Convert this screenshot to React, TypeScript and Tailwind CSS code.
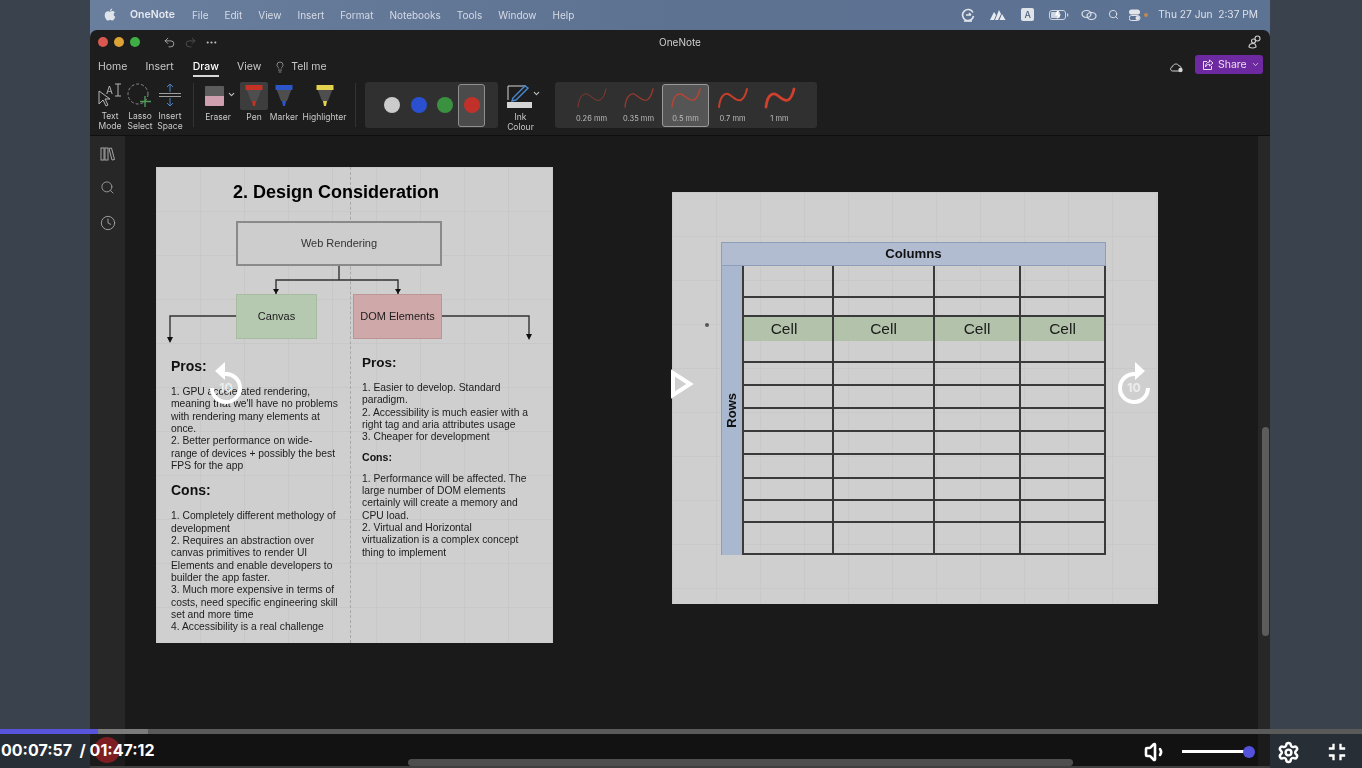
import { ChevronDown, Clock, Lightbulb, MoreHorizontal, Redo2, Search, Settings, Undo2, Volume1 } from "lucide-react";
import { MdFullscreenExit } from "react-icons/md";

const menuItems = ["File", "Edit", "View", "Insert", "Format", "Notebooks", "Tools", "Window", "Help"];

const thicknesses = [
  { label: "0.26 mm", width: 1, opacity: 0.55 },
  { label: "0.35 mm", width: 1.3, opacity: 0.65 },
  { label: "0.5 mm", width: 1.6, opacity: 0.75, active: true },
  { label: "0.7 mm", width: 2, opacity: 0.95 },
  { label: "1 mm", width: 2.8, opacity: 1 },
];

const leftPros = [
  "1. GPU accelerated rendering,",
  "meaning that we'll have no problems",
  "with rendering many elements at",
  "once.",
  "2. Better performance on wide-",
  "range of devices + possibly the best",
  "FPS for the app",
];

const leftCons = [
  "1. Completely different methology of",
  "development",
  "2. Requires an abstraction over",
  "canvas primitives to render UI",
  "Elements and enable developers to",
  "builder the app faster.",
  "3. Much more expensive in terms of",
  "costs, need specific engineering skill",
  "set and more time",
  "4. Accessibility is a real challenge",
];

const rightPros = [
  "1. Easier to develop. Standard",
  "paradigm.",
  "2. Accessibility is much easier with a",
  "right tag and aria attributes usage",
  "3. Cheaper for development",
];

const rightCons = [
  "1. Performance will be affected. The",
  "large number of DOM elements",
  "certainly will create a memory and",
  "CPU load.",
  "2. Virtual and Horizontal",
  "virtualization is a complex concept",
  "thing to implement",
];

const rowHeights = [32, 19, 24, 22, 23, 23, 23, 23, 24, 22, 22, 30];

function Lines({ lines }: { lines: string[] }) {
  return (
    <div className="text-[10.3px] leading-[12.33px] text-[#1c1c1c]">
      {lines.map((l) => (
        <div key={l} className="whitespace-nowrap">{l}</div>
      ))}
    </div>
  );
}

function Squiggle({ width, opacity }: { width: number; opacity: number }) {
  return (
    <svg width="32" height="22" viewBox="0 0 32 22" fill="none" style={{ opacity }}>
      <path d="M2 20C3 10 7 6 11 7C16 9 19 15 24 13C28 11 29 6 30 2" stroke="#d0402c" strokeWidth={width} strokeLinecap="round" />
    </svg>
  );
}

function ToolLabel({ children }: { children: React.ReactNode }) {
  return <div className="text-center text-[8.5px] leading-[10px] text-[#c9c9c9]">{children}</div>;
}

function Funnel({ top, tip }: { top: string; tip: string }) {
  return (
    <svg width="20" height="24" viewBox="0 0 20 24">
      <path d="M2 4H18L13 17H7Z" fill="#4e4e4e" />
      <rect x="1.5" y="1" width="17" height="5" fill={top} />
      <path d="M8 17H12L11 22H9Z" fill={tip} />
    </svg>
  );
}

function Replay({ className, mirrored }: { className: string; mirrored?: boolean }) {
  return (
    <div className={`absolute top-[358px] h-[48px] w-[40px] ${className}`}>
      <svg width="40" height="48" viewBox="0 0 40 48" fill="none" className={mirrored ? "-scale-x-100" : ""}>
        <path d="M21 16A14 14 0 1 0 34 30" stroke="white" strokeWidth="4" />
        <path d="M21 4L31 13L21 22Z" fill="white" />
      </svg>
      <span className="absolute left-0 top-[23px] w-full text-center text-[12px] font-bold leading-[14px] text-[#ececec]">10</span>
    </div>
  );
}

function SlideOne() {
  return (
    <div className="relative h-[476px] w-[397px] shrink-0 bg-[#cfcfcf] bg-[linear-gradient(#c8c8c8_1px,transparent_1px),linear-gradient(90deg,#c8c8c8_1px,transparent_1px)] bg-[size:44px_44px] pt-[13px] font-['Liberation_Sans',sans-serif]">
      <div className="absolute bottom-0 left-[194px] top-0 border-l border-dashed border-[#a8a8a8]" />
      <h2 className="relative pl-[77px] text-[18px] font-bold leading-[24px] text-black">2. Design Consideration</h2>
      <div className="relative mt-[17px] h-[133px]">
        <svg className="absolute left-0 top-0" width="397" height="133" fill="none">
          <path d="M183 45V59M120 73V59H242V73M80 95H14V118M286 95H373V115" stroke="#333" strokeWidth="1.4" />
          <path d="M117 68H123L120 73ZM239 68H245L242 73ZM11 116H17L14 122ZM370 113H376L373 119Z" fill="#111" />
        </svg>
        <div className="absolute left-[80px] top-0 flex h-[45px] w-[206px] items-center justify-center border-2 border-[#8a8a8a] bg-[#cdcdcd] text-[11px] text-[#333]">Web Rendering</div>
        <div className="absolute left-[80px] top-[73px] flex h-[45px] w-[81px] items-center justify-center border border-[#a6bb9f] bg-[#b5c8b0] text-[11px] text-[#1c1c1c]">Canvas</div>
        <div className="absolute left-[197px] top-[73px] flex h-[45px] w-[89px] items-center justify-center border border-[#bd9393] bg-[#cfa9a9] text-[11px] text-[#1c1c1c]">DOM Elements</div>
      </div>
      <div className="relative flex">
        <div className="ml-[15px] w-[191px] pt-[2px]">
          <h3 className="text-[14px] font-bold leading-[20px] text-[#111]">Pros:</h3>
          <div className="mt-[10px]"><Lines lines={leftPros} /></div>
          <h3 className="mt-[8px] text-[14px] font-bold leading-[20px] text-[#111]">Cons:</h3>
          <div className="mt-[10px]"><Lines lines={leftCons} /></div>
        </div>
        <div className="mt-px w-[180px]">
          <h3 className="text-[13.5px] font-bold leading-[16px] text-[#111]">Pros:</h3>
          <div className="mt-[11px]"><Lines lines={rightPros} /></div>
          <h4 className="mt-[7px] text-[10.6px] font-bold leading-[12px] text-[#111]">Cons:</h4>
          <div className="mt-[10px]"><Lines lines={rightCons} /></div>
        </div>
      </div>
    </div>
  );
}

function SlideTwo() {
  return (
    <div className="relative ml-[119px] mt-[25px] h-[412px] w-[486px] shrink-0 bg-[#cfcfcf] bg-[linear-gradient(#c9c9c9_1px,transparent_1px),linear-gradient(90deg,#c9c9c9_1px,transparent_1px)] bg-[size:44px_44px] pl-[49px] pt-[50px] font-['Liberation_Sans',sans-serif]">
      <div className="absolute left-[33px] top-[131px] h-[4px] w-[4px] rounded-full bg-[#555]" />
      <div className="w-[385px]">
        <div className="flex h-[24px] items-center justify-center border border-[#8d9dba] bg-[#b1bcd1] text-[13.2px] font-bold text-[#111]">Columns</div>
        <div className="flex">
          <div className="flex w-[21px] items-center justify-center border-l border-[#8d9dba] bg-[#a9b7cf]">
            <span className="rotate-180 text-[13px] font-bold text-[#111] [writing-mode:vertical-rl]">Rows</span>
          </div>
          <div className="w-[364px] border-b-2 border-l-2 border-r-2 border-[#3a3a3a]">
            {rowHeights.map((h, i) => (
              <div key={i} className={`grid grid-cols-[90px_101px_86px_1fr] border-[#3a3a3a] ${i === 2 ? "bg-[#b3c2aa]" : ""} ${i === 2 || i === 11 ? "" : "border-b-2"}`} style={{ height: h }}>
                {[0, 1, 2, 3].map((c) => (
                  <div key={c} className={`flex items-center justify-center text-[15.5px] text-[#1b1b1b] ${c < 3 ? "border-r-2 border-[#3a3a3a]" : ""} ${c === 0 ? "pr-[8px]" : ""}`}>
                    {i === 2 ? "Cell" : ""}
                  </div>
                ))}
              </div>
            ))}
          </div>
        </div>
      </div>
    </div>
  );
}

export default function App() {
  return (
    <div className="relative flex h-[768px] w-full overflow-hidden bg-[#3a424e] font-['Inter',sans-serif]">
      <div className="ml-[90px] flex w-[1180px] shrink-0 flex-col bg-[linear-gradient(90deg,#6a7e9e,#5d7191_50%,#5d7393)] blur-[0.4px]">
        {/* mac menu bar */}
        <div className="flex h-[30px] shrink-0 items-center pl-[14px] pr-[12px] text-[10px] text-[#d5dbe6]">
          <svg width="12" height="14" viewBox="0 0 12 14" fill="#dfe3ea">
            <path d="M8.3 0.5C8.4 1.6 7.3 3 6 3C5.9 1.8 7.1 0.6 8.3 0.5ZM6.1 3.6C6.8 3.6 7.4 3.1 8.4 3.1C9.3 3.1 10.2 3.6 10.8 4.4C9.1 5.4 9.4 7.9 11.3 8.7C10.8 10.2 9.6 12.6 8.3 12.6C7.5 12.6 7.1 12 6.2 12C5.2 12 4.8 12.6 4 12.6C2.6 12.6 0.7 9.6 0.7 7.2C0.7 4.6 2.4 3.2 3.9 3.2C4.8 3.2 5.5 3.6 6.1 3.6Z" />
          </svg>
          <span className="ml-[14px] mr-[17px] text-[10.5px] font-semibold text-[#e6e9ef]">OneNote</span>
          <div className="flex gap-[16px]">
            {menuItems.map((m) => <span key={m}>{m}</span>)}
          </div>
          <div className="ml-auto flex items-center text-[#dde2ea]">
            <svg width="14" height="14" viewBox="0 0 14 14" fill="none" stroke="#e2e6ec" strokeWidth="1.6"><path d="M12 4.5A5.5 5.5 0 1 0 12.5 8" /><path d="M5 7H10M8 5L10 7" /><path d="M3 13H11" /></svg>
            <svg className="ml-[15px]" width="16" height="12" viewBox="0 0 16 12" fill="#e8ebf0"><path d="M0 11L4 3L6 6L4 11ZM5 11L9 1L11 5L8 11ZM9.5 11L12 5L15.5 11Z" /></svg>
            <div className="ml-[15px] flex h-[13px] w-[13px] items-center justify-center rounded-[2px] bg-[#dfe3ea] text-[9px] font-medium text-[#4e5f7c]">A</div>
            <svg className="ml-[15px]" width="20" height="12" viewBox="0 0 20 12" fill="none"><rect x="0.5" y="1.5" width="16" height="9" rx="2.5" stroke="#cfd5df" /><rect x="2" y="3" width="9" height="6" rx="1" fill="#cfd5df" /><path d="M8 2L6 6.5H9L7.5 10.5L12 5.5H9L10 2Z" fill="#fff" /><rect x="18" y="4.5" width="1.2" height="3" fill="#cfd5df" /></svg>
            <svg className="ml-[12px]" width="16" height="12" viewBox="0 0 16 12" fill="none" stroke="#dde2ea" strokeWidth="1.2"><ellipse cx="5.5" cy="5" rx="4.5" ry="3.5" /><ellipse cx="10.5" cy="7" rx="4.5" ry="3.5" /></svg>
            <Search className="ml-[11px]" size={11} color="#e0e4ea" strokeWidth={2} />
            <svg className="ml-[10px]" width="12" height="12" viewBox="0 0 12 12" fill="#e2e6ec"><rect x="0" y="0.5" width="11" height="5" rx="2.5" /><rect x="0" y="6.5" width="11" height="5" rx="2.5" fill="none" stroke="#e2e6ec" /><circle cx="8.5" cy="9" r="2" /></svg>
            <div className="ml-[3px] h-[4px] w-[4px] rounded-full bg-[#c08a50]" />
            <span className="ml-[10px] whitespace-pre text-[10.2px]">Thu 27 Jun  2:37 PM</span>
          </div>
        </div>

        {/* window */}
        <div className="flex min-h-0 flex-1 flex-col overflow-hidden rounded-t-[7px] bg-[#1d1d1d]">
          <div className="relative flex h-[24px] shrink-0 items-center pl-[8px]">
            <div className="h-[10px] w-[10px] rounded-full bg-[#d9584f]" />
            <div className="ml-[6px] h-[10px] w-[10px] rounded-full bg-[#dca236]" />
            <div className="ml-[6px] h-[10px] w-[10px] rounded-full bg-[#3fae47]" />
            <Undo2 className="ml-[23px]" size={13} color="#bdbdbd" strokeWidth={1.5} />
            <Redo2 className="ml-[8px]" size={13} color="#555" strokeWidth={1.5} />
            <MoreHorizontal className="ml-[8px]" size={13} color="#c0c0c0" />
            <span className="absolute left-0 w-full text-center text-[10px] text-[#cfcfcf]">OneNote</span>
            <svg className="absolute right-[8px] top-[5px]" width="14" height="14" viewBox="0 0 14 14" fill="none" stroke="#cfcfcf" strokeWidth="1.1"><circle cx="9.5" cy="3.5" r="2.5" /><circle cx="5.5" cy="6" r="2" /><path d="M1 12C1 9 3 8.5 5 8.5C7 8.5 8 10 8 12C6 13.2 3 13.2 1 12Z" /></svg>
          </div>

          <div className="relative flex h-[23px] shrink-0 items-center pl-[8px] pt-[2px] text-[10.5px] text-[#c8c8c8]">
            <span>Home</span>
            <span className="ml-[18px]">Insert</span>
            <span className="relative ml-[19px] font-medium text-white">
              Draw
              <span className="absolute left-0 right-0 top-[16px] h-[2px] bg-[#d8d8d8]" />
            </span>
            <span className="ml-[18px]">View</span>
            <Lightbulb className="ml-[13px]" size={12} color="#b5b5b5" strokeWidth={1.4} />
            <span className="ml-[5px]">Tell me</span>
            <svg className="absolute right-[86px] top-[7px]" width="15" height="12" viewBox="0 0 15 12" fill="none"><path d="M3.5 10C1 10 1 6 3.5 5.8C4 2.5 9 2 10 5C13 5 13 10 10 10Z" stroke="#d5d5d5" /><circle cx="11.5" cy="9" r="2.2" fill="#d5d5d5" /></svg>
            <div className="absolute right-[7px] top-[1px] flex h-[19px] w-[68px] items-center rounded-[3px] bg-[#6d2aa0] pl-[7px] text-[10.5px] text-[#e8dcf2]">
              <svg width="12" height="12" viewBox="0 0 12 12" fill="none" stroke="#e8dcf2"><path d="M5 2.5H1.5V10.5H9.5V7" /><path d="M7.5 1L11 4L7.5 7V5.3C5.5 5.3 4.5 6 3.5 8C3.5 5 5 3 7.5 3Z" /></svg>
              <span className="ml-[4px]">Share</span>
              <ChevronDown className="ml-[4px]" size={9} color="#e8dcf2" />
            </div>
          </div>

          {/* ribbon */}
          <div className="flex h-[59px] shrink-0 items-start border-b border-[#0f0f0f] pl-[5px] pt-[5px]">
            <div className="flex w-[90px]">
              <div className="w-[30px]">
                <svg className="mx-auto mt-[1px]" width="28" height="24" viewBox="0 0 28 24" fill="none" stroke="#b5b5b5">
                  <path d="M3 8V21L7 17L10 23L12 22L9 16H14Z" />
                  <path d="M15 1V13M12 1H18M12 13H18" transform="translate(7 0)" />
                  <text x="10" y="11" fontSize="10" fill="#b5b5b5" stroke="none">A</text>
                </svg>
                <div className="mt-[4px]"><ToolLabel>Text<br />Mode</ToolLabel></div>
              </div>
              <div className="w-[30px]">
                <svg className="mx-auto mt-[1px]" width="28" height="24" viewBox="0 0 28 24" fill="none">
                  <circle cx="12" cy="11" r="10" stroke="#8c8c8c" strokeDasharray="3 2" />
                  <path d="M19 13V24M14 18.5H25" stroke="#4f9a58" strokeWidth="1.4" />
                </svg>
                <div className="mt-[4px]"><ToolLabel>Lasso<br />Select</ToolLabel></div>
              </div>
              <div className="w-[30px]">
                <svg className="mx-auto mt-[1px]" width="24" height="24" viewBox="0 0 24 24" fill="none">
                  <path d="M1 10.5H23M1 13.5H23" stroke="#a0a0a0" />
                  <path d="M12 1V9M12 15V23M9 4L12 1L15 4M9 20L12 23L15 20" stroke="#4a86c8" />
                </svg>
                <div className="mt-[4px]"><ToolLabel>Insert<br />Space</ToolLabel></div>
              </div>
            </div>
            <div className="ml-[8px] mt-[1px] h-[44px] w-px bg-[#333]" />
            <div className="ml-[6px] flex">
              <div className="relative w-[40px] pt-[4px]">
                <div className="ml-[5px] h-[20px] w-[19px] rounded-[1px] bg-[linear-gradient(#5c5c5c_50%,#cf9fb0_50%)]" />
                <ChevronDown className="absolute left-[27px] top-[8px]" size={9} color="#c0c0c0" strokeWidth={3} />
                <div className="mt-[6px] pr-[4px]"><ToolLabel>Eraser</ToolLabel></div>
              </div>
              <div className="w-[28px]">
                <div className="flex h-[28px] items-center justify-center rounded-[2px] bg-[#3d3d3d]"><Funnel top="#c43226" tip="#c43226" /></div>
                <div className="mt-[2px]"><ToolLabel>Pen</ToolLabel></div>
              </div>
              <div className="w-[32px]">
                <div className="flex h-[28px] items-center justify-center"><Funnel top="#2c55c9" tip="#2c55c9" /></div>
                <div className="mt-[2px]"><ToolLabel>Marker</ToolLabel></div>
              </div>
              <div className="w-[49px]">
                <div className="flex h-[28px] items-center justify-center"><Funnel top="#e3d24e" tip="#e3d24e" /></div>
                <div className="mt-[2px]"><ToolLabel>Highlighter</ToolLabel></div>
              </div>
            </div>
            <div className="ml-[6px] mt-[1px] h-[44px] w-px bg-[#333]" />
            <div className="ml-[9px] flex h-[46px] w-[133px] items-center rounded-[3px] bg-[#303030] pl-[19px]">
              <div className="h-[16px] w-[16px] rounded-full bg-[#cbcbcb]" />
              <div className="ml-[11px] h-[16px] w-[16px] rounded-full bg-[#2a50d0]" />
              <div className="ml-[10px] h-[16px] w-[16px] rounded-full bg-[#3a9140]" />
              <div className="ml-[5px] flex h-[43px] w-[27px] items-center justify-center rounded-[3px] border border-[#8f8f8f] bg-[#4b4b4b]">
                <div className="h-[16px] w-[16px] rounded-full bg-[#c2302a]" />
              </div>
            </div>
            <div className="relative ml-[4px] w-[42px]">
              <svg className="ml-[4px] mt-[2px]" width="26" height="24" viewBox="0 0 26 24" fill="none">
                <path d="M2 16V2H20" stroke="#d5d5d5" />
                <path d="M7 14L19 2L22 4L10 16L6 17Z" stroke="#4a86c8" strokeWidth="1.4" />
                <rect x="1" y="18" width="25" height="6" fill="#d5d5d5" />
              </svg>
              <ChevronDown className="absolute left-[30px] top-[7px]" size={9} color="#c0c0c0" strokeWidth={3} />
              <div className="pr-[5px] pt-[4px]"><ToolLabel>Ink<br />Colour</ToolLabel></div>
            </div>
            <div className="ml-[11px] flex h-[46px] w-[262px] items-center rounded-[3px] bg-[#303030] pl-[13px]">
              {thicknesses.map((t) => (
                <div key={t.label} className={`flex h-[43px] w-[47px] flex-col items-center rounded-[3px] border pt-[2px] ${t.active ? "border-[#9a9a9a] bg-[#555]" : "border-transparent"}`}>
                  <Squiggle width={t.width} opacity={t.opacity} />
                  <span className="mt-[4px] text-[7.5px] leading-[11px] text-[#bdbdbd]">{t.label}</span>
                </div>
              ))}
            </div>
          </div>

          {/* notebook area */}
          <div className="flex min-h-0 flex-1">
            <div className="flex w-[35px] shrink-0 flex-col items-center bg-[#272727] pt-[11px]">
              <svg width="15" height="14" viewBox="0 0 15 14" fill="none" stroke="#a5a5a5"><rect x="1" y="1" width="3" height="12" /><rect x="5" y="1" width="3" height="12" /><path d="M9 1.5L11.5 1L14.5 12.5L12 13Z" /></svg>
              <Search className="mt-[19px]" size={15} color="#a5a5a5" strokeWidth={1.4} />
              <Clock className="mt-[20px]" size={16} color="#a5a5a5" strokeWidth={1.4} />
            </div>
            <div className="flex min-w-0 flex-1 items-start bg-[#1a1a1a] pl-[31px] pt-[31px]">
              <SlideOne />
              <SlideTwo />
            </div>
            <div className="relative w-[12px] shrink-0 bg-[#272727]">
              <div className="absolute left-[4px] top-[291px] h-[209px] w-[7px] rounded-full bg-[#5c5c5c]" />
            </div>
          </div>
        </div>
      </div>

      {/* player overlay */}
      <Replay className="left-[206px]" mirrored />
      <Replay className="left-[1114px]" />
      <svg className="absolute left-[669px] top-[368px]" width="26" height="32" viewBox="0 0 26 32" fill="none">
        <path d="M4 5V27L21 16Z" stroke="white" strokeWidth="4" />
      </svg>

      <div className="absolute bottom-0 left-0 right-0 h-[39px] bg-[#000]/30" />
      <div className="absolute left-0 right-0 top-[729px] h-[5px] bg-[#5a5a5a]">
        <div className="absolute left-0 top-0 h-full w-[148px] bg-[#7b7b7b]" />
        <div className="absolute left-0 top-0 h-full w-[98px] bg-[#5855dc]" />
      </div>
      <div className="absolute left-[94px] top-[737px] h-[26px] w-[26px] rounded-full bg-[#7d1f22]" />
      <div className="absolute left-[1px] top-[740px] whitespace-pre text-[16px] font-bold leading-[20px] text-white">
        00:07:57  / 01:47:12
      </div>
      <Volume1 className="absolute left-[1144px] top-[740px]" size={24} color="white" strokeWidth={2.6} />
      <div className="absolute left-[1182px] top-[750px] h-[3px] w-[66px] bg-white" />
      <div className="absolute left-[1243px] top-[746px] h-[12px] w-[12px] rounded-full bg-[#5452dc]" />
      <Settings className="absolute left-[1277px] top-[741px]" size={23} color="white" strokeWidth={2.6} />
      <MdFullscreenExit className="absolute left-[1323px] top-[738px]" size={28} color="white" />
      <div className="absolute bottom-[2px] left-[408px] h-[7px] w-[665px] rounded-full bg-[#4e4e4e]" />
      <div className="absolute bottom-0 left-[90px] h-[2px] w-[1180px] bg-[#3f3f3f]" />
    </div>
  );
}
